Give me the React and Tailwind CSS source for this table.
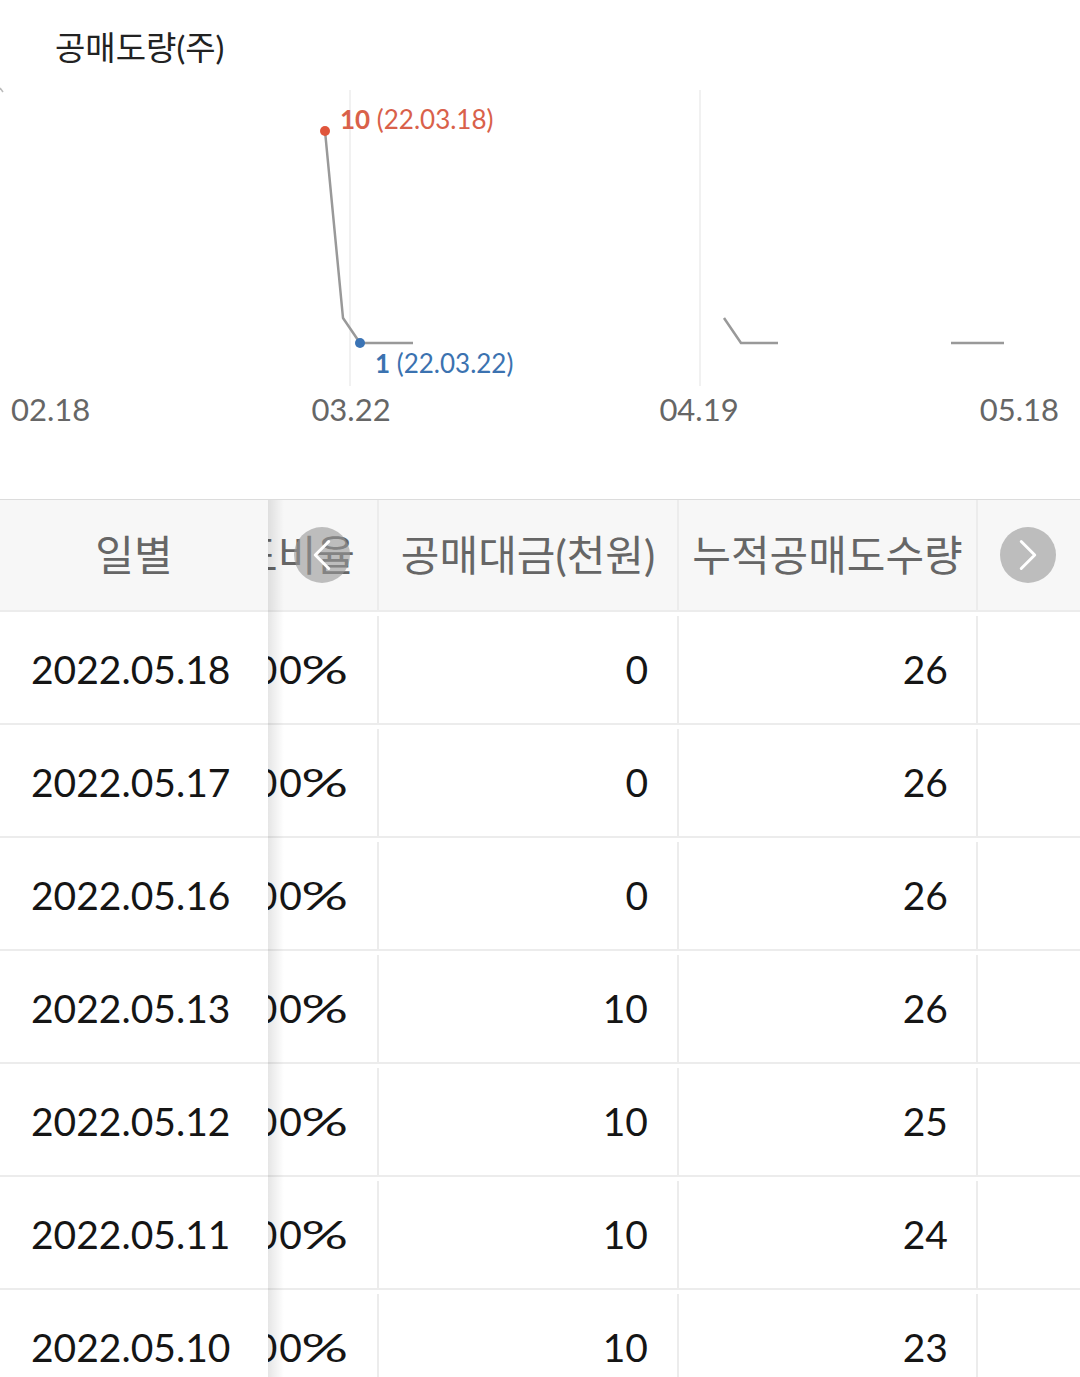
import React from "react";
import { ChevronLeft, ChevronRight } from "lucide-react";

const rows = [
  { date: "2022.05.18", ratio: "0.00", amount: "0", total: "26" },
  { date: "2022.05.17", ratio: "0.00", amount: "0", total: "26" },
  { date: "2022.05.16", ratio: "0.00", amount: "0", total: "26" },
  { date: "2022.05.13", ratio: "0.00", amount: "10", total: "26" },
  { date: "2022.05.12", ratio: "0.00", amount: "10", total: "25" },
  { date: "2022.05.11", ratio: "0.00", amount: "10", total: "24" },
  { date: "2022.05.10", ratio: "0.00", amount: "10", total: "23" },
];

const font = { fontFamily: "Lato, 'Noto Sans CJK KR', sans-serif" };

const Chart = () => (
  <svg width="1080" height="433" viewBox="0 66 1080 433" className="block">
    {/* grid */}
    <line x1="0" y1="88" x2="3" y2="92" stroke="#bbb" strokeWidth="1.5" />
    <line x1="350" y1="90" x2="350" y2="386" stroke="#ececec" strokeWidth="1.5" />
    <line x1="700" y1="90" x2="700" y2="386" stroke="#ececec" strokeWidth="1.5" />

    {/* series */}
    <g fill="none" stroke="#999" strokeWidth="2.5" strokeLinejoin="round">
      <polyline points="325,131 343,318 360,343 413,343" />
      <polyline points="724,318 741,343 778,343" />
      <polyline points="951,343 1004,343" />
    </g>
    <circle cx="325" cy="131" r="5" fill="#e0553b" />
    <circle cx="360" cy="343" r="5" fill="#3b74b5" />

    <g style={font}>
      <text x="340" y="129" fontSize="26" fill="#d9614a">
        <tspan fontWeight="700">10</tspan> (22.03.18)
      </text>
      <text x="375" y="373" fontSize="26" fill="#3b72b0">
        <tspan fontWeight="700">1</tspan> (22.03.22)
      </text>

      <g fontSize="31" fill="#666">
        <text x="11" y="421">02.18</text>
        <text x="351" y="421" textAnchor="middle">03.22</text>
        <text x="699" y="421" textAnchor="middle">04.19</text>
        <text x="1059" y="421" textAnchor="end">05.18</text>
      </g>
    </g>
  </svg>
);

export default function App() {
  return (
    <div className="w-[1080px] bg-white overflow-hidden" style={font}>
      {/* title */}
      <div className="pt-[28px] pl-[55px] text-[33px] leading-[38px] text-[#222]">
        공매도량(주)
      </div>

      <Chart />

      {/* table */}
      <div className="relative flex border-t border-[#dcdcdc]">
        {/* fixed column */}
        <div className="relative z-10 w-[268px] shrink-0 bg-white">
          <div className="h-[112px] flex items-center justify-center bg-[#f7f7f7] border-b-2 border-[#ececec] text-[42px] text-[#666]">
            일별
          </div>
          {rows.map((r) => (
            <div
              key={r.date}
              className="h-[113px] flex items-center pl-[31px] pt-[4px] border-b-2 border-[#ececec] text-[39px] text-[#151515]"
            >
              {r.date}
            </div>
          ))}
          <div className="absolute top-0 bottom-0 left-full w-[16px] bg-gradient-to-r from-black/10 to-transparent" />
        </div>

        {/* scrolled columns */}
        <div className="flex-1 overflow-hidden">
          <div className="ml-[-91px] w-[1100px]">
            <div className="flex h-[112px] bg-[#f7f7f7] border-b-2 border-[#ececec] text-[42px] text-[#666]">
              <div className="w-[202px] shrink-0 flex items-center justify-end pr-[22px] border-r-2 border-[#ececec] whitespace-nowrap">
                공매도비율
              </div>
              <div className="w-[300px] shrink-0 flex items-center justify-center border-r-2 border-[#ececec] whitespace-nowrap">
                공매대금(천원)
              </div>
              <div className="w-[299px] shrink-0 flex items-center justify-center border-r-2 border-[#ececec] whitespace-nowrap">
                누적공매도수량
              </div>
              <div className="w-[200px] shrink-0" />
            </div>
            {rows.map((r) => (
              <div
                key={r.date}
                className="flex h-[113px] pt-[4px] border-b-2 border-[#ececec] text-[39px] text-[#151515]"
              >
                <div className="w-[202px] shrink-0 flex items-center justify-end pr-[29px] border-r-2 border-[#ececec] whitespace-nowrap">
                  <span className="tracking-[2px]">{r.ratio}</span>
                  <span className="inline-block w-[44px] text-right">
                    <span className="inline-block origin-right scale-x-[1.5]">%</span>
                  </span>
                </div>
                <div className="w-[300px] shrink-0 flex items-center justify-end pr-[29px] border-r-2 border-[#ececec]">
                  {r.amount}
                </div>
                <div className="w-[299px] shrink-0 flex items-center justify-end pr-[28px] border-r-2 border-[#ececec]">
                  {r.total}
                </div>
                <div className="w-[200px] shrink-0" />
              </div>
            ))}
          </div>
        </div>

        {/* scroll arrows */}
        <button className="absolute z-20 left-[294px] top-[27px] w-[56px] h-[56px] rounded-full bg-[rgba(150,150,150,0.6)] flex items-center justify-center">
          <ChevronLeft size={54} strokeWidth={1.3} color="#fff" />
        </button>
        <button className="absolute z-20 left-[1000px] top-[27px] w-[56px] h-[56px] rounded-full bg-[#bdbdbd] flex items-center justify-center">
          <ChevronRight size={54} strokeWidth={1.3} color="#fff" />
        </button>
      </div>
    </div>
  );
}
